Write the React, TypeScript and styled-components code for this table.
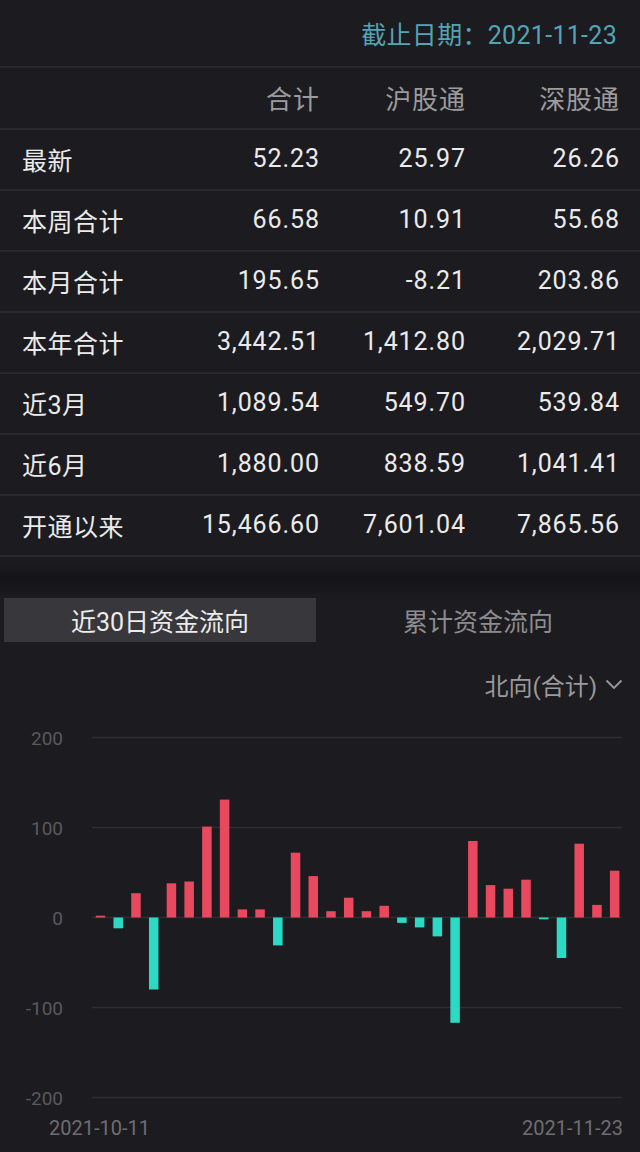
import React from 'react'
import styled, { createGlobalStyle } from 'styled-components'

const GlobalStyle = createGlobalStyle`
    html, body {
        margin: 0;
        padding: 0;
        background: #1c1b1f;
    }
    body {
        font-family: Roboto, "Noto Sans CJK SC", sans-serif;
    }
`

interface Row {
    label: string
    total: string
    sh: string
    sz: string
}

const rows: Row[] = [
    { label: '最新', total: '52.23', sh: '25.97', sz: '26.26' },
    { label: '本周合计', total: '66.58', sh: '10.91', sz: '55.68' },
    { label: '本月合计', total: '195.65', sh: '-8.21', sz: '203.86' },
    { label: '本年合计', total: '3,442.51', sh: '1,412.80', sz: '2,029.71' },
    { label: '近3月', total: '1,089.54', sh: '549.70', sz: '539.84' },
    { label: '近6月', total: '1,880.00', sh: '838.59', sz: '1,041.41' },
    { label: '开通以来', total: '15,466.60', sh: '7,601.04', sz: '7,865.56' },
]

// 近30日北向资金 (亿)
const flows = [
    2, -12, 27, -80, 38, 40, 101, 131, 9, 9, -31, 72, 46, 7, 22,
    7, 13, -6, -11, -21, -117, 85, 36, 32, 42, -2, -45, 82, 14, 52,
]

const Page = styled.div`
    width: 640px;
    min-height: 1152px;
    background: #1c1b1f;
    overflow: hidden;
`

const DateBar = styled.div`
    height: 66px;
    display: flex;
    align-items: center;
    justify-content: flex-end;
    padding-right: 23px;
    font-size: 25px;
    color: #52a4b6;
    letter-spacing: 0.3px;
`

const Table = styled.div`
    border-top: 2px solid #2a2a2e;
`

const TableRow = styled.div<{ $head?: boolean }>`
    display: grid;
    grid-template-columns: 1fr 150px 146px 154px;
    align-items: center;
    height: ${p => (p.$head ? 58 : 57)}px;
    padding: 0 21px 2px 22px;
    border-bottom: 2px solid #2a2a2e;
    font-size: ${p => (p.$head ? 26 : 25)}px;
    color: ${p => (p.$head ? '#9c9c9e' : '#ebebeb')};
`

const Cell = styled.div<{ $left?: boolean }>`
    text-align: ${p => (p.$left ? 'left' : 'right')};
    white-space: nowrap;
    letter-spacing: ${p => (p.$left ? 0.5 : 0.9)}px;
    margin-right: ${p => (p.$left ? 0 : -0.9)}px;
`

const Divider = styled.div`
    height: 41px;
    background: linear-gradient(
        to bottom,
        #1c1b1f 0px,
        #1a191d 12px,
        #151418 20px,
        #18171b 32px,
        #1c1b1f 41px
    );
`

const Tabs = styled.div`
    display: grid;
    grid-template-columns: 1fr 1fr;
    padding: 0 4px;
    height: 44px;
`

const Tab = styled.div<{ $active?: boolean }>`
    display: flex;
    align-items: center;
    justify-content: center;
    margin-right: ${p => (p.$active ? 4 : 0)}px;
    background: ${p => (p.$active ? '#38373c' : 'transparent')};
    color: ${p => (p.$active ? '#ececec' : '#8d8d90')};
    font-size: 25px;
`

const DropRow = styled.div`
    margin-top: 21px;
    height: 42px;
    display: flex;
    align-items: center;
    justify-content: flex-end;
    gap: 8px;
    padding-right: 17px;
    font-size: 24px;
    color: #9a9a9c;
`

const Chart = styled.svg`
    display: block;
`

const TOP = 705
const ZERO = 917.5 - TOP
const SCALE = 0.9
const X0 = 100.5
const STEP = 17.73
const BAR_W = 9.5

const FlowChart: React.FC = () => {
    const grid = [200, 100, 0, -100, -200]
    return (
        <Chart width={640} height={447} viewBox="0 0 640 447">
            {grid.map(v => {
                const y = ZERO - v * SCALE
                return (
                    <g key={v}>
                        <line x1={92} x2={622} y1={y} y2={y} stroke="#2e2e32" strokeWidth={1.5} />
                        <text
                            x={63}
                            y={y + 7}
                            textAnchor="end"
                            fontSize={19}
                            fill="#5a5a5e"
                            fontFamily="Roboto, sans-serif"
                        >
                            {v}
                        </text>
                    </g>
                )
            })}
            {flows.map((v, i) => {
                const cx = X0 + i * STEP
                const h = Math.max(Math.abs(v) * SCALE, 1.5)
                const y = v >= 0 ? ZERO - h : ZERO
                return (
                    <rect
                        key={i}
                        x={cx - BAR_W / 2}
                        y={y}
                        width={BAR_W}
                        height={h}
                        fill={v >= 0 ? '#e9495e' : '#2cd9c4'}
                    />
                )
            })}
            <text x={49} y={1135 - TOP} fontSize={20} fill="#6e6e72" fontFamily="Roboto, sans-serif">
                2021-10-11
            </text>
            <text x={623} y={1135 - TOP} textAnchor="end" fontSize={20} fill="#6e6e72" fontFamily="Roboto, sans-serif">
                2021-11-23
            </text>
        </Chart>
    )
}

const App: React.FC = () => {
    return (
        <Page>
            <GlobalStyle />
            <DateBar>截止日期：2021-11-23</DateBar>
            <Table>
                <TableRow $head>
                    <Cell $left />
                    <Cell>合计</Cell>
                    <Cell>沪股通</Cell>
                    <Cell>深股通</Cell>
                </TableRow>
                {rows.map(r => (
                    <TableRow key={r.label}>
                        <Cell $left>{r.label}</Cell>
                        <Cell>{r.total}</Cell>
                        <Cell>{r.sh}</Cell>
                        <Cell>{r.sz}</Cell>
                    </TableRow>
                ))}
            </Table>
            <Divider />
            <Tabs>
                <Tab $active>近30日资金流向</Tab>
                <Tab>累计资金流向</Tab>
            </Tabs>
            <DropRow>
                <span>北向(合计)</span>
                <svg width="18" height="11" viewBox="0 0 18 11">
                    <path d="M1.5 1.5 L9 9 L16.5 1.5" fill="none" stroke="#9a9a9c" strokeWidth="1.8" />
                </svg>
            </DropRow>
            <FlowChart />
        </Page>
    )
}

export default App
